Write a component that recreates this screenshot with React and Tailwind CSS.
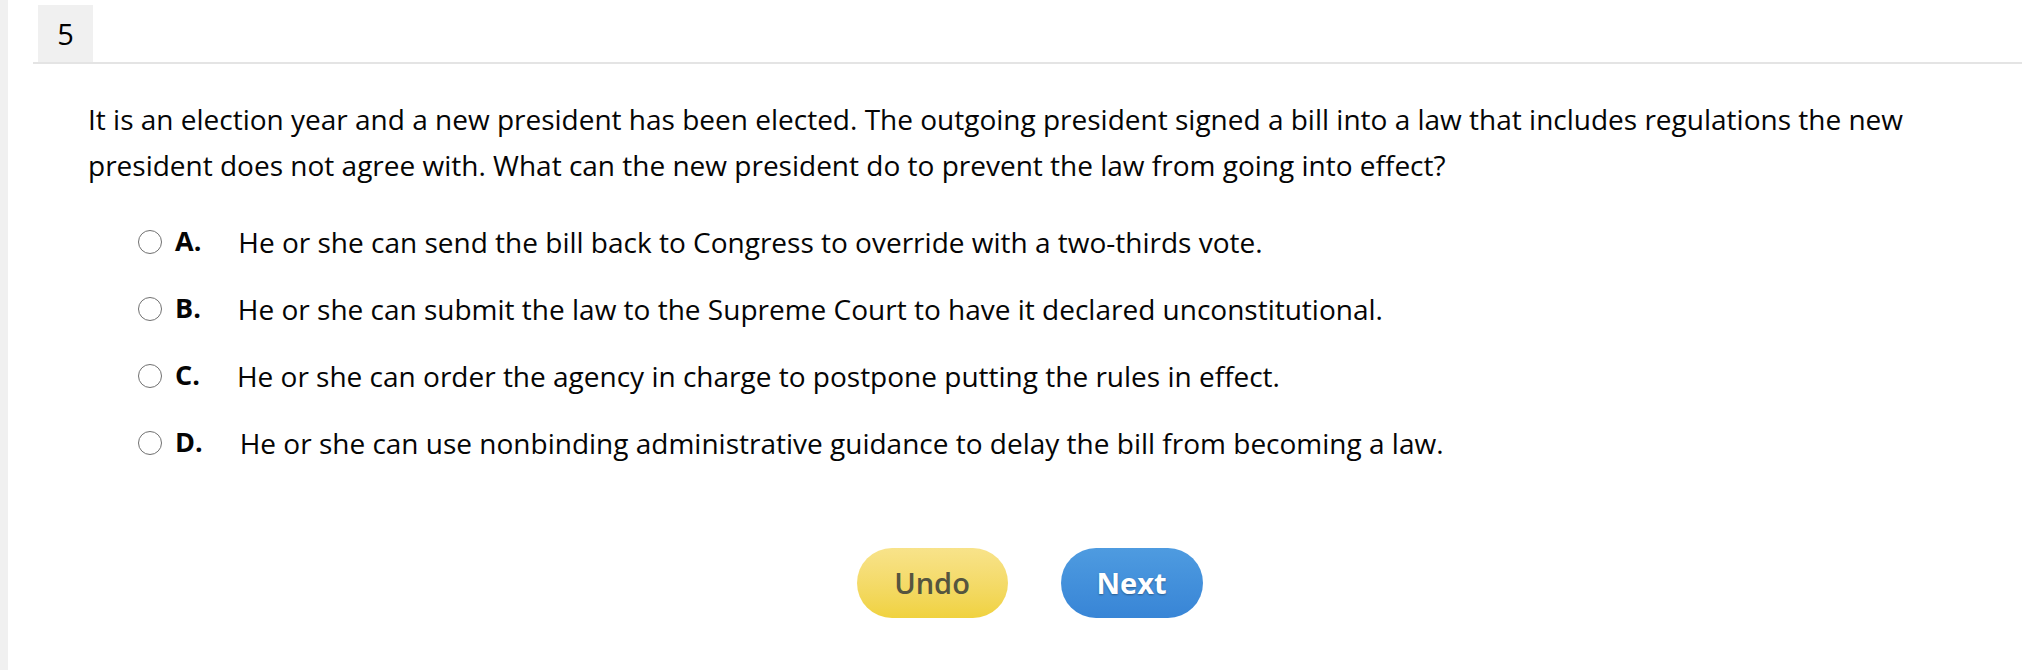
import React from "react";

const options = [
  { l: "A.", t: "He or she can send the bill back to Congress to override with a two-thirds vote." },
  { l: "B.", t: "He or she can submit the law to the Supreme Court to have it declared unconstitutional." },
  { l: "C.", t: "He or she can order the agency in charge to postpone putting the rules in effect." },
  { l: "D.", t: "He or she can use nonbinding administrative guidance to delay the bill from becoming a law." },
];

export default function App() {
  return (
    <div className="flex min-h-[670px] w-[2026px] bg-white text-[#050505] font-['Open_Sans',sans-serif]">
      <div className="w-[8px] shrink-0 bg-[#f0f0f0]" />
      <div className="ml-[25px] mr-[4px] flex-1">
        <div className="mt-[5px] flex border-b-2 border-[#e4e4e4]">
          <div className="ml-[5px] flex h-[57px] w-[55px] items-center justify-center bg-[#f0f0f0] text-[29px] text-black">5</div>
        </div>
        <div className="pl-[55px] pr-[40px] pt-[32px]">
          <p className="text-[28px] leading-[46px]">
            It is an election year and a new president has been elected. The outgoing president signed a bill into a law that includes regulations the new president does not agree with. What can the new president do to prevent the law from going into effect?
          </p>
          <div className="mt-[20px] pl-[50px]">
            {options.map((o) => (
              <div key={o.l} className="flex h-[67px] items-center">
                <span className="mr-[13px] h-[24px] w-[24px] shrink-0 rounded-full border-[1.5px] border-[#707070] bg-white" />
                <span className="mr-[37px] text-[27px] font-bold">{o.l}</span>
                <span className="text-[28px]">{o.t}</span>
              </div>
            ))}
          </div>
        </div>
        <div className="mt-[72px] flex justify-center gap-[53px] pl-[4px]">
          <button className="h-[70px] w-[151px] rounded-full bg-gradient-to-b from-[#f8e38a] to-[#f0d23e] text-[29px] font-semibold text-[#55553f]">
            Undo
          </button>
          <button className="h-[70px] w-[142px] rounded-full bg-gradient-to-b from-[#4e9be0] to-[#3885d6] text-[29px] font-bold text-white [text-shadow:0_1px_2px_rgba(0,0,0,0.35)]">
            Next
          </button>
        </div>
      </div>
    </div>
  );
}
